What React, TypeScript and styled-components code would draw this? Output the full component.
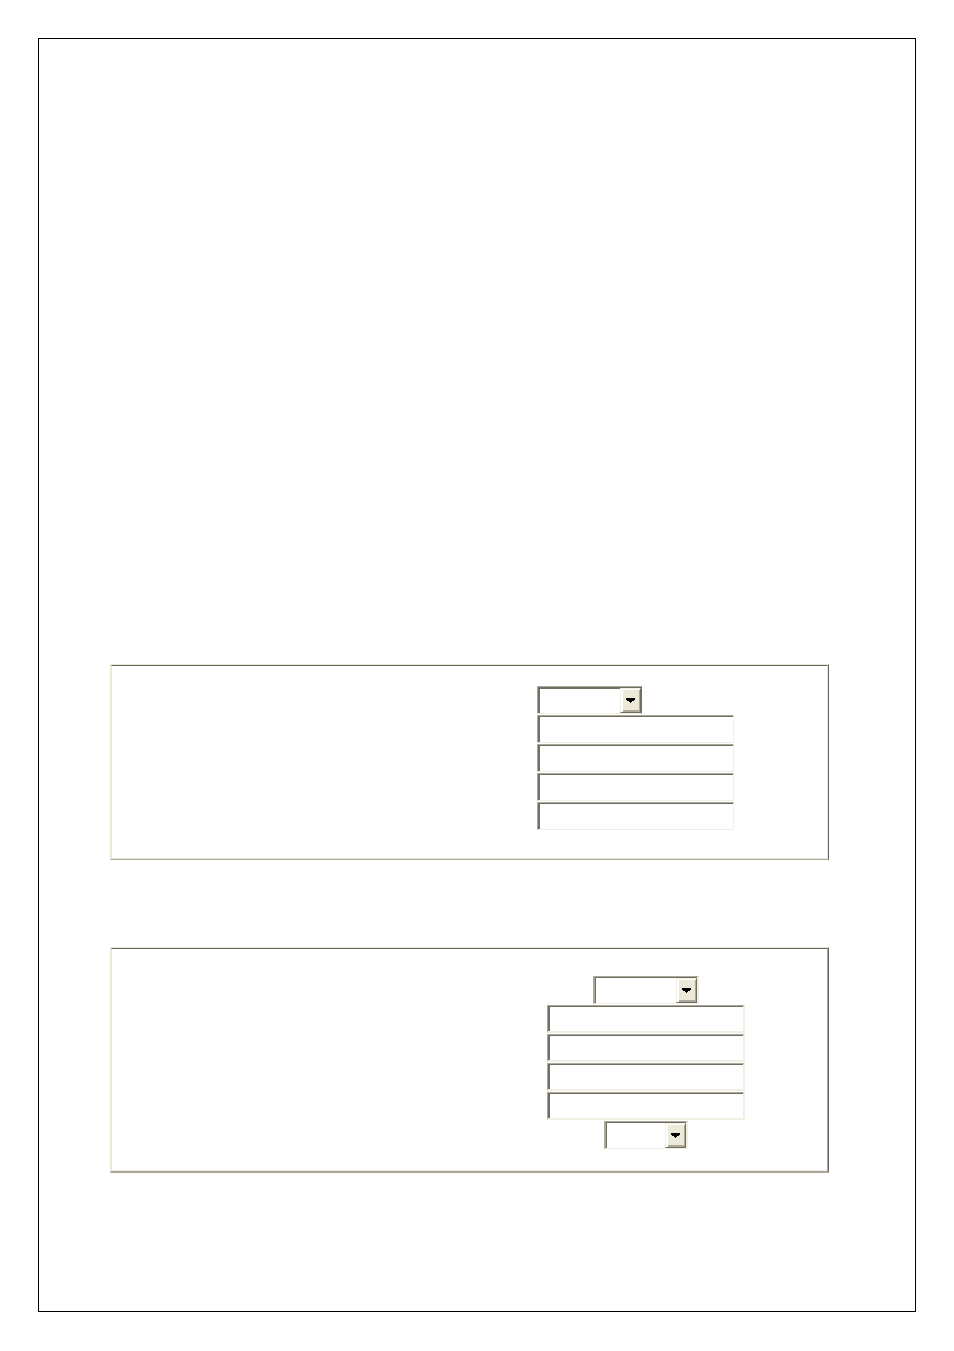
import React from "react";
import styled, { createGlobalStyle } from "styled-components";

const shade = {
  light: "#ece9d8",
  pale: "#f1efe2",
  mid: "#aca899",
  dark: "#716f64",
  edge: "#646260",
};

const GlobalStyle = createGlobalStyle`
  *, *::before, *::after { box-sizing: border-box; }
  body {
    margin: 0;
    background: #fff;
    color: #000;
    font: 14px/18px "Liberation Sans", sans-serif;
  }
`;

const Page = styled.main`
  padding: 38px;
`;

const Sheet = styled.form`
  display: flex;
  flex-direction: column;
  gap: 87px;
  padding: 625px 86px 138px 71px;
  border: 1px solid #000;
`;

const Panel = styled.section<{ $base: number }>`
  border-style: solid;
  border-width: 1px 1px ${(p) => p.$base}px 1px;
  border-color: ${shade.light} ${shade.edge} ${shade.mid} ${shade.light};
`;

const PanelBody = styled.div<{ $columns: string; $pad: string; $side: string }>`
  display: grid;
  grid-template-columns: ${(p) => p.$columns};
  padding: ${(p) => p.$pad};
  border: 1px solid;
  border-color: ${shade.edge} ${(p) => p.$side} ${shade.light} ${shade.light};
`;

const Fields = styled.div<{ $align: string; $width: number }>`
  grid-column: 2;
  display: flex;
  flex-direction: column;
  align-items: ${(p) => p.$align};
  gap: 1px;
  width: ${(p) => p.$width}px;
`;

const TextBox = styled.input<{ $wideEdge?: boolean }>`
  width: 100%;
  height: 28px;
  padding: 0 4px;
  border: 1px solid;
  border-width: ${(p) => (p.$wideEdge ? "1px 2px 2px 1px" : "1px")};
  border-color: ${shade.mid} ${shade.pale} ${shade.pale} ${shade.mid};
  border-radius: 0;
  background: #fff;
  box-shadow: inset 2px 1px 0 ${shade.dark};
  font: inherit;
  outline: none;
`;

const Picker = styled.div<{ $width: number; $wideEdge?: boolean }>`
  display: grid;
  grid-template-columns: minmax(0, 1fr) 21px;
  width: ${(p) => p.$width}px;
  height: 28px;
  border-style: solid;
  border-width: ${(p) => (p.$wideEdge ? "1px 2px 1px 2px" : "1px")};
  border-color: ${shade.mid} ${(p) => (p.$wideEdge ? shade.pale : shade.dark)}
    ${shade.pale} ${shade.mid};
  background: #fff;
`;

const Choice = styled.select<{ $wideEdge?: boolean }>`
  grid-area: 1 / 1 / 2 / 3;
  appearance: none;
  width: 100%;
  padding: 0 24px 0 4px;
  border: solid ${shade.dark};
  border-width: ${(p) => (p.$wideEdge ? "1px 1px 0 1px" : "2px 1px 0 2px")};
  border-radius: 0;
  background: transparent;
  font: inherit;
  outline: none;
`;

const DropMark = styled.span`
  grid-area: 1 / 2;
  display: flex;
  align-items: center;
  justify-content: center;
  margin: 1px 0 0;
  border: 1px solid;
  border-color: ${shade.pale} ${shade.dark} ${shade.dark} ${shade.pale};
  background: ${shade.light};
  box-shadow: inset 2px 1px 0 #fff, inset -1px -2px 0 ${shade.mid};
  pointer-events: none;
`;

interface DropdownProps {
  label: string;
  width: number;
  wideEdge?: boolean;
}

function Dropdown({ label, width, wideEdge }: DropdownProps) {
  return (
    <Picker $width={width} $wideEdge={wideEdge}>
      <Choice aria-label={label} defaultValue="" $wideEdge={wideEdge}>
        <option value="" aria-label={label} />
      </Choice>
      <DropMark aria-hidden="true">
        <svg width="9" height="5" viewBox="0 0 9 5" shapeRendering="crispEdges">
          <path d="M0 0H9V2H8V3H6V4H5V5H4V4H3V3H1V2H0Z" />
        </svg>
      </DropMark>
    </Picker>
  );
}

const inputs = ["Field 1", "Field 2", "Field 3", "Field 4"];

export default function App() {
  return (
    <>
      <GlobalStyle />
      <Page>
        <Sheet>
          <Panel $base={1}>
            <PanelBody $columns="425fr 290fr" $pad="20px 0 28px" $side={shade.light}>
              <Fields $align="flex-start" $width={197}>
                <Dropdown label="Type" width={105} />
                {inputs.map((name) => (
                  <TextBox key={name} type="text" aria-label={name} />
                ))}
              </Fields>
            </PanelBody>
          </Panel>
          <Panel $base={2}>
            <PanelBody $columns="435fr 280fr" $pad="27px 0 21px" $side={shade.mid}>
              <Fields $align="center" $width={198}>
                <Dropdown label="Type" width={106} wideEdge />
                {inputs.map((name) => (
                  <TextBox key={name} type="text" aria-label={name} $wideEdge />
                ))}
                <Dropdown label="Option" width={84} wideEdge />
              </Fields>
            </PanelBody>
          </Panel>
        </Sheet>
      </Page>
    </>
  );
}
